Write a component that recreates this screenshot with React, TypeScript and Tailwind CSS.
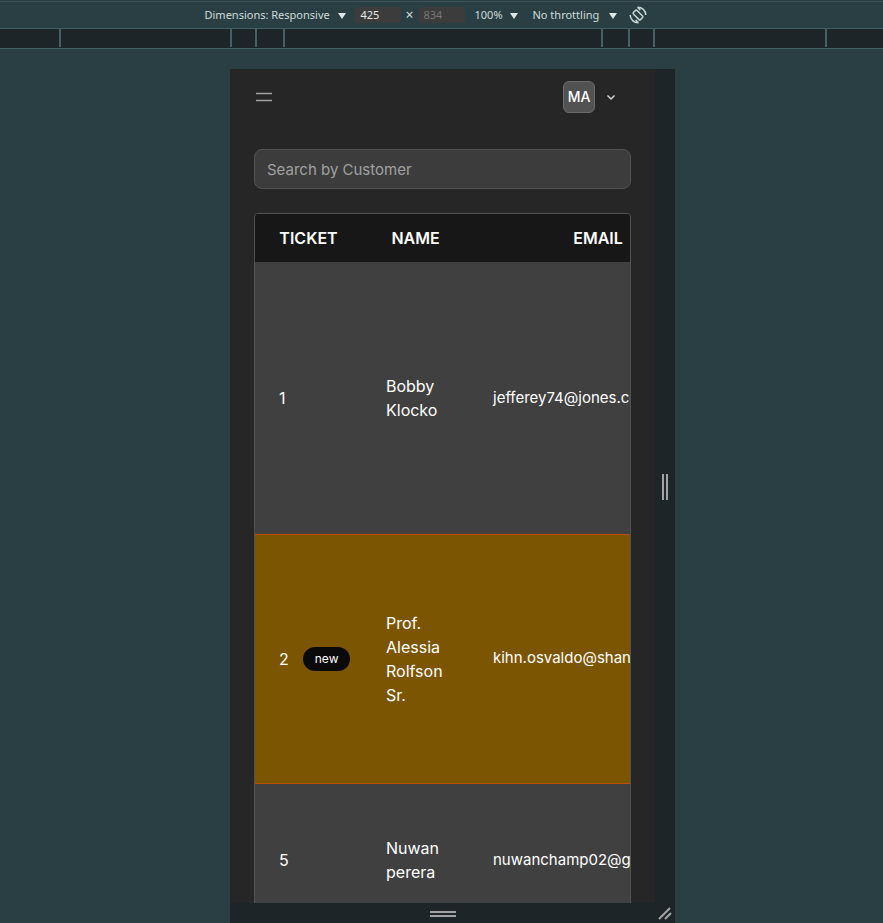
import React from "react";

type Ticket = { id: number; name: string; email: string; isNew?: boolean; height: string };

const tickets: Ticket[] = [
  { id: 1, name: "Bobby Klocko", email: "jefferey74@jones.com", height: "h-[272px]" },
  { id: 2, name: "Prof. Alessia Rolfson Sr.", email: "kihn.osvaldo@shanahan.com", isNew: true, height: "h-[249px]" },
  { id: 5, name: "Nuwan perera", email: "nuwanchamp02@gmail.com", height: "h-[154px]" },
];

function Arrow() {
  return (
    <svg width="8" height="6" viewBox="0 0 8 6" className="pointer-events-none mt-0.5 shrink-0 fill-[#dfe7e7]" aria-hidden="true">
      <path d="M0 0h8L4 6z" />
    </svg>
  );
}

function ToolbarSelect({ label, value, width }: { label: string; value: string; width: string }) {
  return (
    <label className="flex items-center gap-1">
      <select aria-label={label} defaultValue={value} className={`${width} appearance-none bg-transparent outline-none`}>
        <option>{value}</option>
      </select>
      <Arrow />
    </label>
  );
}

function Toolbar() {
  const field = "h-4 w-[47px] rounded bg-[#3c3c3c] px-1.5 outline-none";
  return (
    <div className="flex h-[29px] shrink-0 border-b border-[#426066] pt-px">
      <div className="flex flex-1 items-center justify-center border-t border-[#3d5158] pr-8 text-[11px] text-[#cfdada]">
        <ToolbarSelect label="Dimensions" value="Dimensions: Responsive" width="w-[130px]" />
        <input aria-label="Width" defaultValue="425" className={`${field} ml-2 text-[#e8e8e8]`} />
        <span className="mx-1 text-sm leading-none">×</span>
        <input aria-label="Height" placeholder="834" className={`${field} placeholder:text-[#777]`} />
        <div className="ml-2.5 flex items-center gap-[15px]">
          <ToolbarSelect label="Zoom" value="100%" width="w-[31px]" />
          <ToolbarSelect label="Throttling" value="No throttling" width="w-[72px]" />
        </div>
        <button aria-label="Rotate" className="ml-3">
          <svg width="18" height="18" viewBox="0 0 18 18" fill="none" stroke="#c8d3d3" strokeWidth="1.5">
            <rect x="6.500" y="4" width="5" height="10" rx="1" transform="rotate(-45 9 9)" />
            <path d="M8.500 1.200A8 8 0 0 1 16.800 9M8.500 1.200l2.800 2.800M9.500 16.800A8 8 0 0 1 1.200 9M9.500 16.800l-2.800-2.800" />
          </svg>
        </button>
      </div>
    </div>
  );
}

function Ruler() {
  const band = "flex h-full justify-center border-x-2 border-[#426066]";
  return (
    <div className="flex h-5 shrink-0 justify-center border-b border-[#426066] bg-[#1e2528] pb-px pl-0.5">
      <div className={`${band} w-[768px]`}>
        <div className={`${band} w-[425px]`}>
          <div className={`${band} w-[375px]`}>
            <div className={`${band} w-[320px]`} />
          </div>
        </div>
      </div>
    </div>
  );
}

function TicketTable() {
  return (
    <div className="mt-6 overflow-x-auto overflow-y-hidden rounded-t border border-[#525252]">
      <table className="w-[472px] table-fixed border-collapse">
        <colgroup>
          <col className="w-[107px]" />
          <col className="w-[107px]" />
          <col className="w-[258px]" />
        </colgroup>
        <thead className="bg-[#171717]">
          <tr className="h-12">
            <th className="font-semibold">TICKET</th>
            <th className="font-semibold">NAME</th>
            <th className="font-semibold">EMAIL</th>
          </tr>
        </thead>
        <tbody>
          {tickets.map((t) => (
            <tr
              key={t.id}
              className={`${t.height} ${t.isNew ? "border-y border-[#bb4d00] bg-[#7c5503]" : "bg-[#404040]"}`}
            >
              <td className="pl-6">
                <div className="flex items-center gap-3.5">
                  {t.id}
                  {t.isNew && (
                    <span className="rounded-full bg-[#0a0a0a] px-3 py-1 text-xs">new</span>
                  )}
                </div>
              </td>
              <td className="px-6">{t.name}</td>
              <td className="px-6 text-[15px]">{t.email}</td>
            </tr>
          ))}
        </tbody>
      </table>
    </div>
  );
}

export default function App() {
  return (
    <div className="flex h-screen flex-col overflow-hidden bg-[#293f43] font-['Noto_Sans',sans-serif]">
      <Toolbar />
      <Ruler />
      <main className="flex min-h-0 flex-1 justify-center pt-5 pl-[22px]">
        <div className="flex w-[445px] flex-col bg-[#1e2528]">
          <div className="flex min-h-0 flex-1">
            <div className="min-w-0 flex-1 overflow-hidden bg-[#262626] px-6 pt-3 font-[Inter,sans-serif] text-base text-white">
              <header className="flex h-8 items-center justify-between">
                <button aria-label="Open menu" className="p-0.5">
                  <svg width="16" height="16" viewBox="0 0 16 16" stroke="#a1a1a1" strokeWidth="1.500">
                    <path d="M0 4.500h16M0 11.500h16" />
                  </svg>
                </button>
                <button aria-label="Account menu" className="flex items-center gap-2.5 pr-3.5">
                  <span className="flex size-8 items-center justify-center rounded-md border border-[#6b6b6b] bg-[#525252] text-sm font-medium">
                    MA
                  </span>
                  <svg width="12" height="12" viewBox="0 0 12 12" fill="none" stroke="#d4d4d4" strokeWidth="1.500">
                    <path d="M2.500 4.500 6 8l3.500-3.500" />
                  </svg>
                </button>
              </header>
              <input
                type="search"
                aria-label="Search by Customer"
                placeholder="Search by Customer"
                className="mt-9 block h-10 w-full rounded-lg border border-[#525252] bg-[#3c3c3c] px-3 text-[15px] outline-none placeholder:text-[#a1a1a1]"
              />
              <TicketTable />
            </div>
            <button aria-label="Resize width" className="flex w-5 items-center justify-center pt-0.5">
              <span className="h-[26px] w-1.5 border-x-2 border-[#a3a3a3]" />
            </button>
          </div>
          <div className="flex h-5 items-center">
            <button aria-label="Resize height" className="flex h-full flex-1 items-center justify-center pt-0.5 pl-px">
              <span className="h-1.5 w-[26px] border-y-2 border-[#a3a3a3]" />
            </button>
            <button aria-label="Resize both" className="flex w-5 items-center justify-center">
              <svg width="14" height="14" viewBox="0 0 14 14" stroke="#a3a3a3" strokeWidth="2">
                <path d="M1 13 12 2M7 13l6-6" />
              </svg>
            </button>
          </div>
        </div>
      </main>
    </div>
  );
}
